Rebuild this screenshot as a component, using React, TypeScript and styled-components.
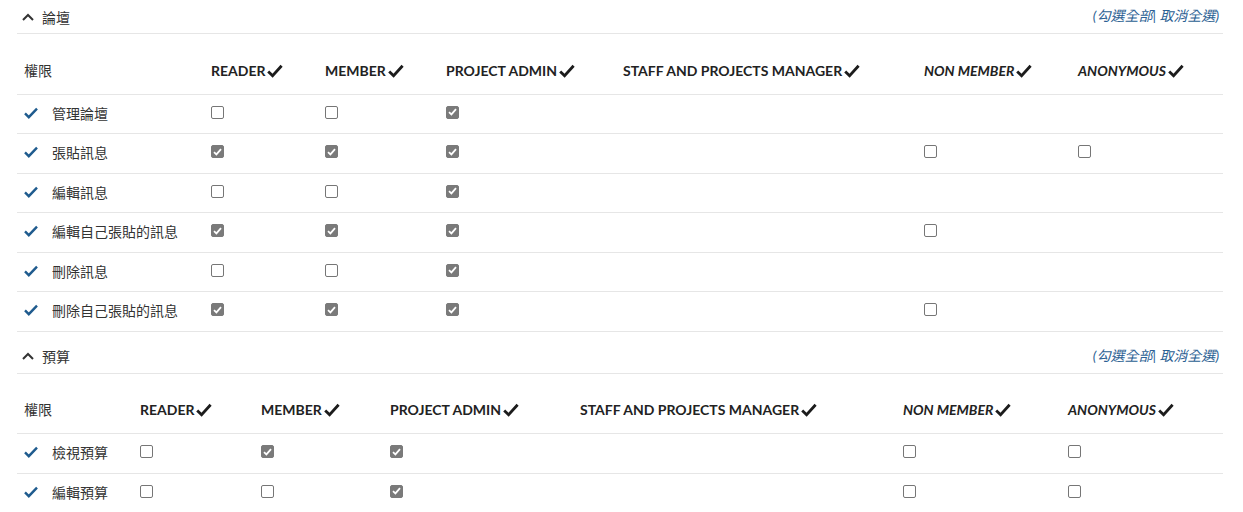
import React from "react";
import styled, { createGlobalStyle } from "styled-components";

const Global = createGlobalStyle`
  html, body { margin: 0; padding: 0; background: #fff; }
  body { font-family: Lato, "Noto Sans CJK TC", sans-serif; color: #333; }
`;

const Page = styled.div`
  padding: 0 20px 0 17px;
`;

const Section = styled.section<{ $first?: boolean }>`
  margin-top: ${(p) => (p.$first ? "0" : "8px")};
`;

const SectionHeader = styled.div`
  display: flex;
  align-items: center;
  justify-content: space-between;
  height: 34px;
  border-bottom: 1px solid #e6e6e6;
  box-sizing: border-box;
  padding: 0 4px 0 5px;
`;

const Title = styled.div`
  display: flex;
  align-items: center;
  gap: 8px;
  font-size: 14px;
  color: #333;
  font-family: Lato, "Noto Sans CJK TC", sans-serif;
`;

const Links = styled.div`
  font-style: italic;
  font-size: 14px;
  color: #2b6193;
  font-family: Lato, "Noto Sans CJK TC", sans-serif;
  margin-top: -3px;
`;

const Link = styled.a`
  color: inherit;
  text-decoration: none;
  cursor: pointer;
`;

const Table = styled.table`
  width: 100%;
  border-collapse: collapse;
  table-layout: fixed;
  margin-top: 18px;
`;

const Th = styled.th<{ $italic?: boolean; $plain?: boolean }>`
  text-align: left;
  vertical-align: bottom;
  height: 42px;
  padding: 0 7px 13px;
  box-sizing: border-box;
  font-size: 14px;
  line-height: 20px;
  white-space: nowrap;
  font-weight: ${(p) => (p.$plain ? 400 : 700)};
  font-style: ${(p) => (p.$italic ? "italic" : "normal")};
  color: ${(p) => (p.$plain ? "#333" : "#222")};
  text-transform: ${(p) => (p.$plain ? "none" : "uppercase")};
  border-bottom: 1px solid #e6e6e6;
`;

const HeadInner = styled.span`
  display: inline-flex;
  align-items: center;
  gap: 2px;
`;

const Tr = styled.tr`
  height: 39.5px;
  border-bottom: 1px solid #e6e6e6;
`;

const Td = styled.td`
  padding: 0 7px 2px;
  vertical-align: middle;
  font-size: 14px;
  color: #333;
`;

const Label = styled.span`
  display: inline-flex;
  align-items: center;
  gap: 14px;
  white-space: nowrap;
`;

const Box = styled.span<{ $checked?: boolean }>`
  display: flex;
  align-items: center;
  justify-content: center;
  width: 13px;
  height: 13px;
  box-sizing: border-box;
  border-radius: 2px;
  border: 1px solid ${(p) => (p.$checked ? "#7a7a7a" : "#767676")};
  background: ${(p) => (p.$checked ? "#7a7a7a" : "#fff")};
  margin-top: -1px;
`;

const Chevron = () => (
  <svg width="12" height="8" viewBox="0 0 12 8">
    <path d="M1 7 L6 2 L11 7" fill="none" stroke="#333" strokeWidth="2" />
  </svg>
);

const HeadCheck = () => (
  <svg width="16" height="14" viewBox="0 0 16 14">
    <path d="M1.2 7.4 L5.6 11.8 L14.6 1.8" fill="none" stroke="#1c1c1c" strokeWidth="2.8" />
  </svg>
);

const BlueCheck = () => (
  <svg width="14" height="12" viewBox="0 0 14 12">
    <path d="M1 6.4 L4.8 10.2 L13 1.6" fill="none" stroke="#1f5b8e" strokeWidth="2.4" />
  </svg>
);

const Check = ({ checked }: { checked: boolean }) => (
  <Box $checked={checked}>
    {checked && (
      <svg width="9" height="8" viewBox="0 0 9 8">
        <path d="M1 4.2 L3.4 6.4 L8 1.2" fill="none" stroke="#fff" strokeWidth="1.8" />
      </svg>
    )}
  </Box>
);

type Cell = null | boolean;
type Row = { label: string; cells: Cell[] };
type SectionData = { title: string; widths: number[]; rows: Row[] };

const roles: { name: string; italic?: boolean }[] = [
  { name: "Reader" },
  { name: "Member" },
  { name: "Project admin" },
  { name: "Staff and projects manager" },
  { name: "Non member", italic: true },
  { name: "Anonymous", italic: true },
];

const sections: SectionData[] = [
  {
    title: "論壇",
    widths: [187, 114, 121, 177, 301, 154, 152],
    rows: [
      { label: "管理論壇", cells: [false, false, true, null, null, null] },
      { label: "張貼訊息", cells: [true, true, true, null, false, false] },
      { label: "編輯訊息", cells: [false, false, true, null, null, null] },
      { label: "編輯自己張貼的訊息", cells: [true, true, true, null, false, null] },
      { label: "刪除訊息", cells: [false, false, true, null, null, null] },
      { label: "刪除自己張貼的訊息", cells: [true, true, true, null, false, null] },
    ],
  },
  {
    title: "預算",
    widths: [116, 121, 129, 190, 323, 165, 162],
    rows: [
      { label: "檢視預算", cells: [false, true, true, null, false, false] },
      { label: "編輯預算", cells: [false, false, true, null, false, false] },
    ],
  },
];

export default function App() {
  return (
    <Page>
      <Global />
      {sections.map((s, si) => (
        <Section key={s.title} $first={si === 0}>
          <SectionHeader>
            <Title>
              <Chevron />
              {s.title}
            </Title>
            <Links>
              (<Link>勾選全部</Link>| <Link>取消全選</Link>)
            </Links>
          </SectionHeader>
          <Table>
            <colgroup>
              {s.widths.map((w, i) => (
                <col key={i} style={{ width: w }} />
              ))}
            </colgroup>
            <thead>
              <tr>
                <Th $plain>權限</Th>
                {roles.map((r) => (
                  <Th key={r.name} $italic={r.italic}>
                    <HeadInner>
                      {r.name}
                      <HeadCheck />
                    </HeadInner>
                  </Th>
                ))}
              </tr>
            </thead>
            <tbody>
              {s.rows.map((row, ri) => (
                <Tr key={ri}>
                  <Td>
                    <Label>
                      <BlueCheck />
                      {row.label}
                    </Label>
                  </Td>
                  {row.cells.map((c, ci) => (
                    <Td key={ci}>{c !== null && <Check checked={c} />}</Td>
                  ))}
                </Tr>
              ))}
            </tbody>
          </Table>
        </Section>
      ))}
    </Page>
  );
}
